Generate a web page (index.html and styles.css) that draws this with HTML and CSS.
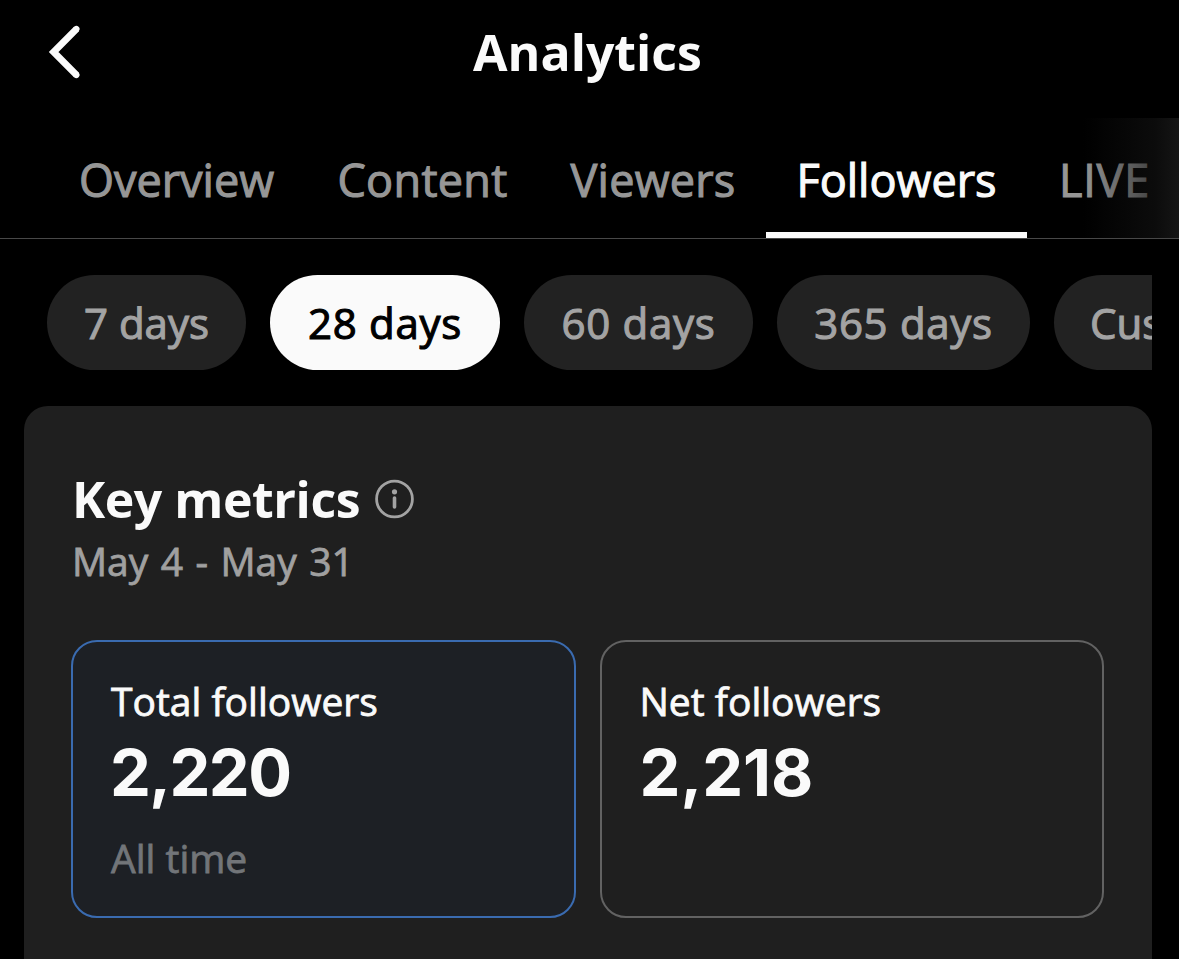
FILE: index.html
```html
<!DOCTYPE html>
<html lang="en">
<head>
  <meta charset="utf-8">
  <title>Analytics</title>
  <link rel="stylesheet" href="styles.css">
</head>
<body>
  <header class="header">
    <svg class="back" width="40" height="60" viewBox="0 0 40 60" fill="none" stroke="#fafafa">
      <path d="M32.6 6.8 L9.6 30 L32.6 53.2" stroke-width="6.8"/>
      <path d="M32.2 7.2 L32.4 7 M32.2 52.8 L32.4 53" stroke-linecap="round" stroke-width="6.2"/>
    </svg>
    <h1 class="title">Analytics</h1>
  </header>

  <nav class="tabs">
    <div class="tab overview">Overview</div>
    <div class="tab content">Content</div>
    <div class="tab viewers">Viewers</div>
    <div class="tab followers active">Followers</div>
    <div class="tab live">LIVE</div>
    <div class="fade"></div>
  </nav>

  <div class="ranges">
    <div class="chip d7">7 days</div>
    <div class="chip d28 selected">28 days</div>
    <div class="chip d60">60 days</div>
    <div class="chip d365">365 days</div>
    <div class="chip custom">Custom</div>
  </div>

  <main class="card">
    <div class="heading">
      <h2>Key metrics</h2>
      <svg width="40" height="40" viewBox="0 0 40 40" fill="none" stroke="#a3a3a3">
        <circle cx="19.5" cy="20" r="17.9" stroke-width="2.8"/>
        <circle cx="19.5" cy="12.8" r="2.6" fill="#a3a3a3" stroke="none"/>
        <path d="M19.5 19 V28" stroke-width="3.6" stroke-linecap="round"/>
      </svg>
    </div>
    <div class="dates">May 4 - May 31</div>
    <div class="metrics">
      <div class="metric selected">
        <div class="label">Total followers</div>
        <div class="value total">2,220</div>
        <div class="note">All time</div>
      </div>
      <div class="metric">
        <div class="label">Net followers</div>
        <div class="value">2,218</div>
      </div>
    </div>
  </main>
</body>
</html>
```

FILE: styles.css
```css
* {
  box-sizing: border-box;
}
html, body {
  margin: 0;
  height: 100%;
}
body {
  display: flex;
  flex-direction: column;
  overflow: hidden;
  background: #000;
  color: #fafafa;
  font-family: "Open Sans", "Noto Sans", sans-serif;
  white-space: nowrap;
}
h1, h2 {
  margin: 0;
}
/* medium weight, between regular and bold */
.tabs, .ranges {
  -webkit-text-stroke: 1.1px currentColor;
}
.dates, .label, .note {
  -webkit-text-stroke: 0.8px currentColor;
}
.header {
  display: grid;
  grid-template-columns: 1fr auto 1fr;
  align-items: center;
  height: 118px;
  padding: 0 48px 14px 44px;
}
.title {
  font-size: 50px;
  font-weight: 700;
  line-height: 60px;
}
.tabs {
  position: relative;
  display: flex;
  flex: none;
  height: 121px;
  padding-left: 48px;
  border-bottom: 1px solid #484848;
  color: #969696;
  font-size: 45px;
  line-height: 123px;
}
.tab {
  flex: none;
  height: 120px;
  text-align: center;
}
.tab.active {
  color: #fafafa;
  box-shadow: inset 0 -6px #fafafa;
}
.overview {
  width: 257px;
}
.content {
  width: 235px;
  letter-spacing: 0.3px;
}
.viewers {
  width: 226px;
  letter-spacing: 0.2px;
}
.followers {
  width: 261px;
}
.live {
  width: 155px;
  letter-spacing: 0.8px;
}
.fade {
  position: absolute;
  top: 0;
  right: 0;
  width: 96px;
  height: 120px;
  background: linear-gradient(to right, transparent, rgba(18, 18, 18, 0.65) 75%, #151515);
}
.ranges {
  display: flex;
  flex: none;
  gap: 24px;
  height: 95px;
  margin: 36px 27px 36px 0;
  padding-left: 47px;
  overflow: hidden;
}
.chip {
  flex: none;
  border-radius: 48px;
  background: #222;
  color: #a3a3a3;
  font-size: 42px;
  line-height: 95px;
  letter-spacing: 0.7px;
  text-align: center;
}
.chip.selected {
  background: #fafafa;
  color: #000;
}
.d7 {
  width: 199px;
  letter-spacing: 0;
}
.d28 {
  width: 230px;
}
.d60 {
  width: 229px;
}
.d365 {
  width: 253px;
}
.custom {
  padding: 0 36px;
  letter-spacing: 0;
}
.card {
  flex: 1;
  margin: 0 27px 0 24px;
  padding: 63px 48px 0;
  border-radius: 24px 24px 0 0;
  background: #1f1f1f;
}
.heading {
  display: flex;
  align-items: center;
  gap: 15px;
  height: 60px;
}
.heading h2 {
  font-size: 50px;
  line-height: 60px;
  letter-spacing: -0.45px;
}
.dates {
  margin: 7px 0 54px;
  color: #a0a0a0;
  font-size: 39px;
  line-height: 50px;
  word-spacing: 2.3px;
}
.metrics {
  display: flex;
  gap: 24px;
  margin-left: -1px;
}
.metric {
  flex: 1;
  height: 278px;
  padding: 34px 38px;
  border: 2px solid #626262;
  border-radius: 26px;
}
.metric.selected {
  border-color: #3a6bb0;
  background: #1d2025;
}
.label {
  font-size: 39px;
  line-height: 50px;
}
.value {
  margin-top: 7px;
  font-family: Inter, sans-serif;
  font-size: 65px;
  font-weight: 700;
  line-height: 80px;
}
.total {
  margin-left: -1px;
  letter-spacing: -1.6px;
}
.note {
  margin-top: 20px;
  color: #727579;
  font-size: 39px;
  line-height: 50px;
}
```
